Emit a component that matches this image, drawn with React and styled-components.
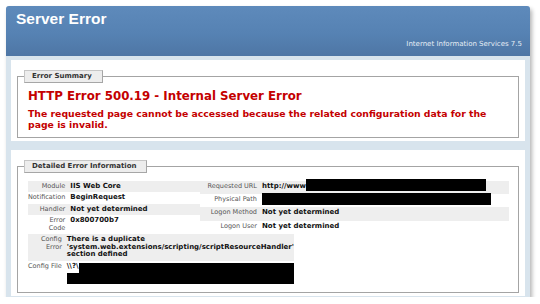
import React from 'react';
import styled, { createGlobalStyle } from 'styled-components';

const GlobalStyle = createGlobalStyle`
  html, body {
    margin: 0;
    padding: 0;
    background: #fff;
  }
  body {
    font-family: "DejaVu Sans", Verdana, sans-serif;
    color: #000;
  }
`;

const details = {
  left: [
    { label: 'Module', value: 'IIS Web Core' },
    { label: 'Notification', value: 'BeginRequest' },
    { label: 'Handler', value: 'Not yet determined' },
    { label: ['Error', 'Code'], value: '0x800700b7' },
  ],
  right: [
    { label: 'Requested URL', value: 'http://www', redact: { w: 180, h: 12.5, top: -4, bottom: -1 } },
    { label: 'Physical Path', value: '', redact: { w: 229, h: 12, top: -2.5, bottom: -2 } },
    { label: 'Logon Method', value: 'Not yet determined' },
    { label: 'Logon User', value: 'Not yet determined' },
  ],
};

function Label({ text }) {
  if (Array.isArray(text)) {
    return <>{text[0]}<br />{text[1]}</>;
  }
  return text;
}

function DetailTable({ rows, $labelWidth, $grow }) {
  return (
    <Table $grow={$grow}>
      <tbody>
        {rows.map((row, i) => (
          <Row key={i} $alt={i % 2 === 0}>
            <Th $width={$labelWidth}><Label text={row.label} /></Th>
            <Td>
              {row.value}
              {row.redact && (
                <InlineRedact
                  style={{
                    width: row.redact.w,
                    height: row.redact.h,
                    marginTop: row.redact.top,
                    marginBottom: row.redact.bottom,
                  }}
                />
              )}
            </Td>
          </Row>
        ))}
      </tbody>
    </Table>
  );
}

function App() {
  return (
    <>
      <GlobalStyle />
      <Page>
        <Window>
          <Header>
            <Title>Server Error</Title>
            <Version>Internet Information Services 7.5</Version>
          </Header>
          <Body>
            <Container $top={10}>
              <Fieldset $bottom={6}>
                <Legend>Error Summary</Legend>
                <ErrorTitle>HTTP Error 500.19 - Internal Server Error</ErrorTitle>
                <ErrorMessage>
                  The requested page cannot be accessed because the related configuration data for the page is invalid.
                </ErrorMessage>
              </Fieldset>
            </Container>
            <Container $top={10}>
              <Fieldset $bottom={6}>
                <Legend>Detailed Error Information</Legend>
                <Details>
                  <DetailTable rows={details.left} $labelWidth={36} />
                  <DetailTable rows={details.right} $labelWidth={57} $grow />
                </Details>
                <ConfigTable>
                  <tbody>
                    <Row $alt>
                      <Th $width={36}>Config<br />Error</Th>
                      <Td>There is a duplicate 'system.web.extensions/scripting/scriptResourceHandler' section defined</Td>
                    </Row>
                    <Row>
                      <Th $width={36}>Config File</Th>
                      <Td>
                        <PathLine>
                          <span>\\?\</span>
                          <BlockRedact $fill />
                        </PathLine>
                        <BlockRedact $height={11} />
                      </Td>
                    </Row>
                  </tbody>
                </ConfigTable>
              </Fieldset>
            </Container>
          </Body>
        </Window>
      </Page>
    </>
  );
}

export default App;

const Page = styled.div`
  padding: 6px 10px 0 6px;
`;

const Window = styled.div`
  width: 524px;
  display: flex;
  flex-direction: column;
  background: #d8e4ed;
  border-radius: 3px 3px 0 0;
  box-shadow: 2px 3px 4px rgba(0, 0, 0, 0.3);
`;

const Header = styled.header`
  height: 50px;
  box-sizing: border-box;
  padding: 4px 8px 8px 10px;
  display: flex;
  flex-direction: column;
  justify-content: space-between;
  border-radius: 3px 3px 0 0;
  background: linear-gradient(#5e8abb, #5682b3 55%, #4e76a5);
`;

const Title = styled.h1`
  margin: 0;
  font: bold 15.5px/18px "Liberation Sans", Arial, sans-serif;
  color: #fff;
`;

const Version = styled.p`
  margin: 0;
  align-self: flex-end;
  font-size: 7px;
  line-height: 8px;
  color: #e6edf5;
`;

const Body = styled.div`
  padding: 4px 5px 1px 5px;
  display: flex;
  flex-direction: column;
  gap: 9px;
`;

const Container = styled.section`
  background: #fff;
  padding: ${p => p.$top}px 6px 3px 6px;
`;

const Fieldset = styled.fieldset`
  margin: 0;
  min-width: 0;
  border: 1px solid #a4a4a4;
  padding: 0 9px ${p => p.$bottom}px 10px;
`;

const Legend = styled.legend`
  margin-left: -4px;
  padding: 0 10px 0 7px;
  background: #ededed;
  border: 1px solid #c6c6c6;
  border-right-color: #a6a6a6;
  border-bottom-color: #a6a6a6;
  font-weight: bold;
  font-size: 7px;
  line-height: 11px;
  color: #333;
`;

const ErrorTitle = styled.h2`
  margin: 5.5px 0 0;
  font-size: 11.8px;
  line-height: 14px;
  font-weight: bold;
  color: #c40000;
`;

const ErrorMessage = styled.h3`
  margin: 5px 0 0;
  font-size: 9.3px;
  line-height: 11.5px;
  font-weight: bold;
  color: #c40000;
`;

const Details = styled.div`
  display: flex;
  margin-top: 8px;
`;

const Table = styled.table`
  border-collapse: collapse;
  border-spacing: 0;
  ${p => (p.$grow ? 'flex: 1;' : 'width: 172px;')}
`;

const ConfigTable = styled.table`
  border-collapse: collapse;
  border-spacing: 0;
  width: min-content;
`;

const Row = styled.tr`
  background: ${p => (p.$alt ? '#eeeeee' : 'transparent')};
`;

const Th = styled.th`
  width: ${p => p.$width}px;
  padding: 2px 5px 2px 0;
  text-align: right;
  vertical-align: top;
  white-space: nowrap;
  font-weight: normal;
  font-size: 6.5px;
  line-height: 7.5px;
  color: #555;
`;

const Td = styled.td`
  padding: 2px 0;
  text-align: left;
  vertical-align: top;
  font-weight: bold;
  font-size: 7px;
  line-height: 7.5px;
  color: #111;
`;

const InlineRedact = styled.span`
  display: inline-block;
  vertical-align: top;
  background: #000;
`;

const PathLine = styled.div`
  display: flex;
  height: 10.5px;
`;

const BlockRedact = styled.div`
  background: #000;
  ${p => (p.$fill ? 'flex: 1;' : `height: ${p.$height}px;`)}
`;
